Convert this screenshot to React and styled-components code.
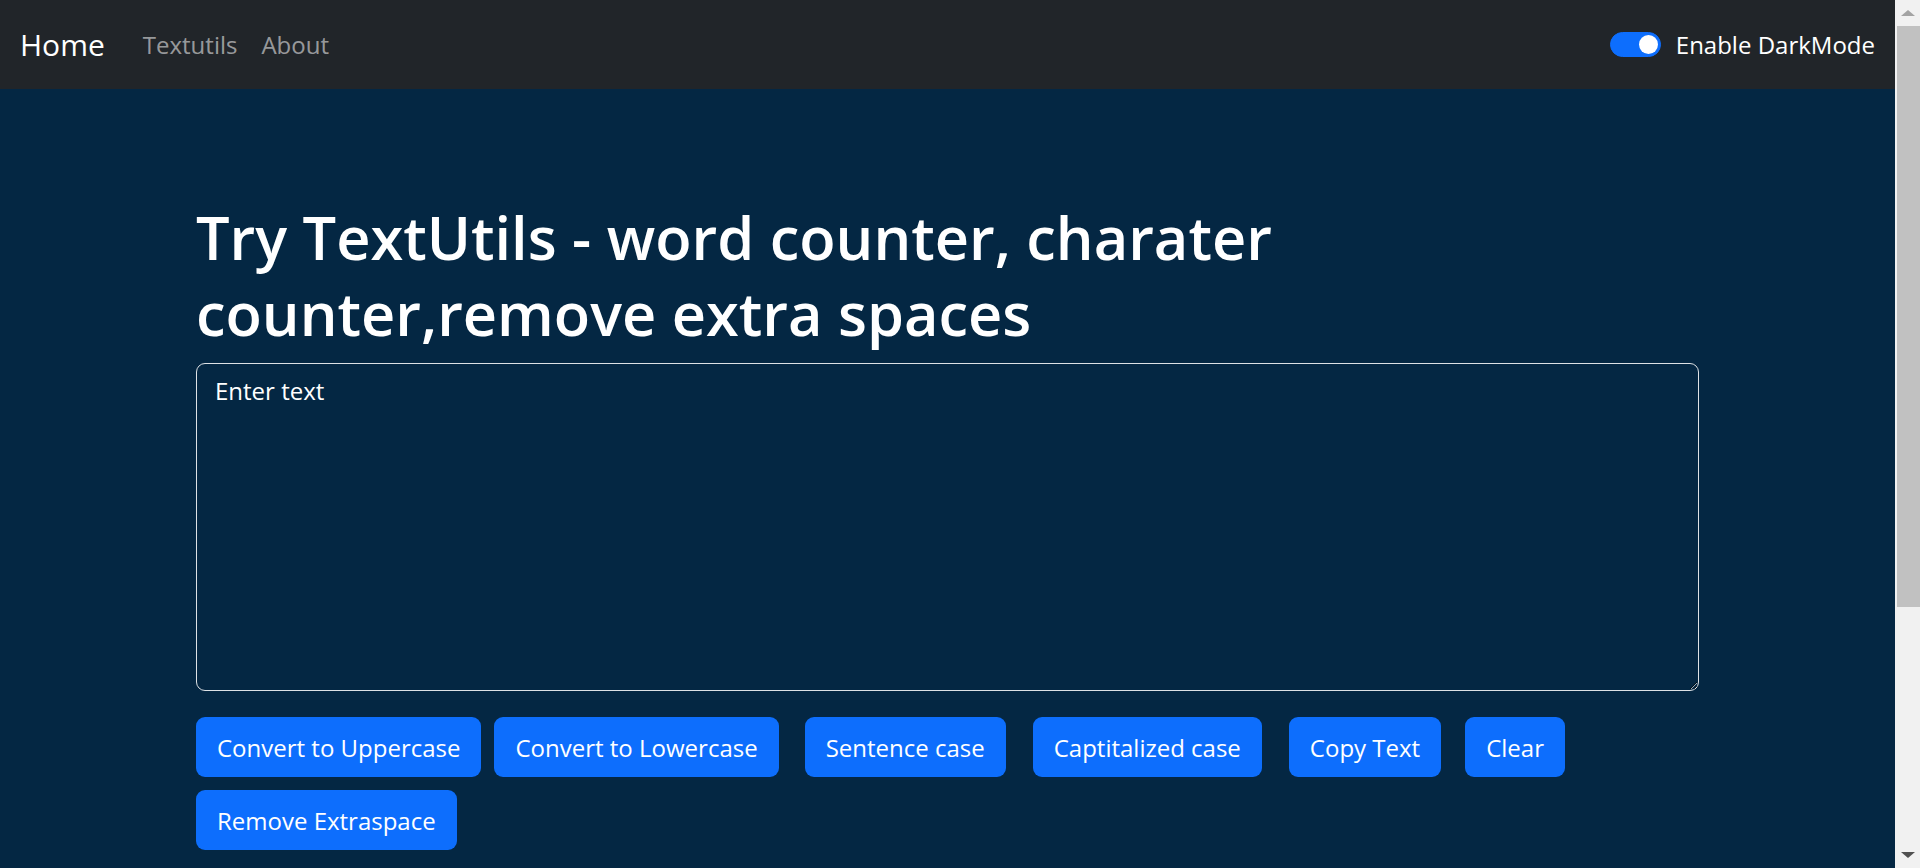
import React, { useState } from 'react';
import styled, { createGlobalStyle } from 'styled-components';

const GlobalStyle = createGlobalStyle`
  body {
    margin: 0;
    background: #042743;
    color: #ffffff;
    font-family: "Open Sans", "Noto Sans", sans-serif;
  }
`;

const Page = styled.div`
  margin-right: 25px;
`;

const Nav = styled.nav`
  height: 89px;
  background: #212529;
  display: flex;
  align-items: center;
  padding: 0 20px;
  box-sizing: border-box;
`;

const Brand = styled.a`
  font-size: 30px;
  line-height: 45px;
  color: #ffffff;
  text-decoration: none;
  margin-right: 26px;
`;

const NavList = styled.ul`
  display: flex;
  list-style: none;
  margin: 0;
  padding: 0;
`;

const NavLink = styled.a`
  display: block;
  font-size: 24px;
  line-height: 36px;
  padding: 0 12px;
  color: rgba(255, 255, 255, 0.55);
  text-decoration: none;
`;

const SwitchWrap = styled.label`
  margin-left: auto;
  display: flex;
  align-items: center;
  gap: 15px;
  font-size: 24px;
  line-height: 36px;
  cursor: pointer;
`;

const Track = styled.span`
  width: 51px;
  height: 25px;
  box-sizing: border-box;
  border-radius: 13px;
  background: ${(p) => (p.$on ? '#0d6efd' : 'transparent')};
  border: 1px solid ${(p) => (p.$on ? '#0d6efd' : '#9aa0a6')};
  display: flex;
  align-items: center;
  justify-content: ${(p) => (p.$on ? 'flex-end' : 'flex-start')};
  padding: 0 2px;
`;

const Knob = styled.span`
  width: 19px;
  height: 19px;
  border-radius: 50%;
  background: ${(p) => (p.$on ? '#ffffff' : '#9aa0a6')};
`;

const Main = styled.main`
  max-width: 1503px;
  margin: 0 auto;
  padding-top: 110px;
`;

const Heading = styled.h1`
  font-size: 59.5px;
  font-weight: 600;
  line-height: 76px;
  margin: 0 0 12px;
`;

const TextBox = styled.textarea`
  display: block;
  width: 100%;
  height: 328px;
  box-sizing: border-box;
  padding: 9px 18px;
  border: 1px solid #dee2e6;
  border-radius: 9px;
  background: #042743;
  color: #ffffff;
  font-family: inherit;
  font-size: 24px;
  line-height: 36px;
  outline: none;

  &::placeholder {
    color: #ffffff;
    opacity: 1;
  }
`;

const ButtonRow = styled.div`
  display: flex;
  flex-wrap: wrap;
  row-gap: 13px;
  margin-top: 26px;
`;

const Button = styled.button`
  height: 60px;
  padding: 0 21px;
  margin-left: ${(p) => p.$gap || 0}px;
  border: none;
  border-radius: 9px;
  background: #0d6efd;
  color: #ffffff;
  font-family: inherit;
  font-size: 24px;
  cursor: pointer;
`;

const Summary = styled.section`
  margin-top: 36px;
  padding-bottom: 40px;

  h2 {
    font-size: 48px;
    font-weight: 600;
    line-height: 58px;
    margin: 0 0 12px;
  }

  p {
    font-size: 24px;
    line-height: 36px;
    margin: 0 0 24px;
  }
`;

// browser scrollbar as seen in the screenshot (headless hides the real one)
const ScrollRail = styled.div`
  position: fixed;
  top: 0;
  right: 0;
  width: 25px;
  height: 100vh;
  background: #f1f1f1;
  display: flex;
  flex-direction: column;
`;

const Arrow = styled.div`
  height: 26px;
  display: flex;
  align-items: center;
  justify-content: center;

  &::before {
    content: '';
    border-left: 7px solid transparent;
    border-right: 7px solid transparent;
    ${(p) =>
      p.$down
        ? 'border-top: 6px solid #505050;'
        : 'border-bottom: 6px solid #a3a3a3;'}
  }
`;

const Thumb = styled.div`
  height: 581px;
  margin-left: 2px;
  background: #c1c1c1;
`;

const Spacer = styled.div`
  flex: 1;
`;

const buttons = [
  { label: 'Convert to Uppercase', gap: 0 },
  { label: 'Convert to Lowercase', gap: 13 },
  { label: 'Sentence case', gap: 26 },
  { label: 'Captitalized case', gap: 27 },
  { label: 'Copy Text', gap: 27 },
  { label: 'Clear', gap: 24 },
  { label: 'Remove Extraspace', gap: 0 },
];

export default function App() {
  const [text, setText] = useState('');
  const [dark, setDark] = useState(true);
  const words = text.split(/\s+/).filter((w) => w.length).length;

  return (
    <>
      <GlobalStyle />
      <Page>
        <Nav>
          <Brand href="#">Home</Brand>
          <NavList>
            <li><NavLink href="#">Textutils</NavLink></li>
            <li><NavLink href="#">About</NavLink></li>
          </NavList>
          <SwitchWrap onClick={() => setDark(!dark)}>
            <Track $on={dark}>
              <Knob $on={dark} />
            </Track>
            Enable DarkMode
          </SwitchWrap>
        </Nav>
        <Main>
          <Heading>Try TextUtils - word counter, charater counter,remove extra spaces</Heading>
          <TextBox
            placeholder="Enter text"
            value={text}
            onChange={(e) => setText(e.target.value)}
          />
          <ButtonRow>
            {buttons.map((b) => (
              <Button key={b.label} $gap={b.gap}>{b.label}</Button>
            ))}
          </ButtonRow>
          <Summary>
            <h2>Your text summary</h2>
            <p>{words} words and {text.length} characters</p>
            <p>{0.008 * words} Minutes read</p>
            <h2>Preview</h2>
            <p>{text.length > 0 ? text : 'Nothing to preview!'}</p>
          </Summary>
        </Main>
      </Page>
      <ScrollRail>
        <Arrow />
        <Thumb />
        <Spacer />
        <Arrow $down />
      </ScrollRail>
    </>
  );
}
